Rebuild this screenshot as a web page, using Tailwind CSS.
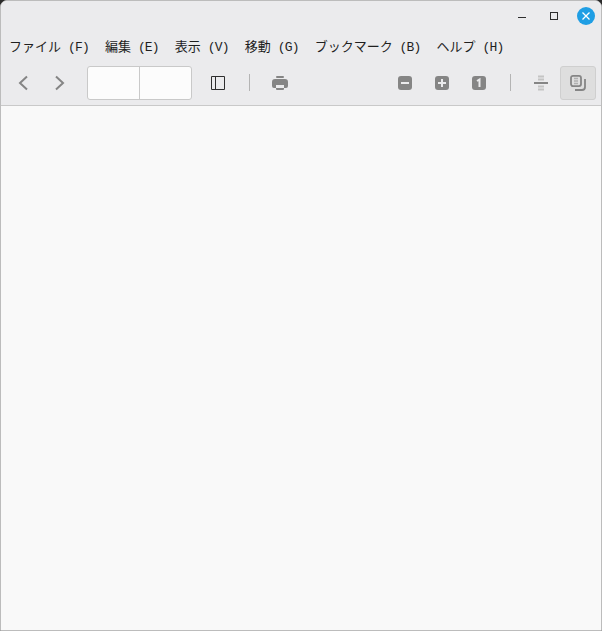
<!DOCTYPE html>
<html lang="ja">
<head>
    <meta charset="UTF-8">
    <title>Viewer</title>
    <script src="https://cdn.jsdelivr.net/npm/@tailwindcss/browser@4"></script>
</head>
<body class="bg-[#2b2b2b]">
    <div class="flex h-[631px] w-[602px] flex-col overflow-hidden rounded-t-[7px] border border-[#bcbcbc] bg-[#f9f9f9]">
        <!-- Title bar -->
        <div class="flex h-[31px] items-start justify-end bg-[#ebebed] pr-[6px] pt-[6px]">
            <button class="flex h-[18px] w-[18px] items-center justify-center">
                <svg width="18" height="18" viewBox="0 0 18 18"><path d="M5 10.500h8" stroke="#2e2e2e" stroke-width="1"/></svg>
            </button>
            <button class="ml-[14px] flex h-[18px] w-[18px] items-center justify-center">
                <svg width="18" height="18" viewBox="0 0 18 18"><rect x="5.500" y="5.500" width="7" height="7" fill="none" stroke="#2e2e2e" stroke-width="1"/></svg>
            </button>
            <button class="ml-[14px] flex h-[18px] w-[18px] items-center justify-center rounded-full bg-[#1f9ee4]">
                <svg width="18" height="18" viewBox="0 0 18 18"><path d="M5.500 5.500l7 7M12.500 5.500l-7 7" stroke="#fff" stroke-width="1.300"/></svg>
            </button>
        </div>

        <!-- Menu bar -->
        <div class="flex h-[29px] items-center gap-[16px] bg-[#ebebed] pl-[8px] pt-[1px] font-['Liberation_Mono','Noto_Sans_CJK_JP',monospace] text-[13px] leading-none text-[#1f1f1f]">
            <span>ファイル<span class="tracking-[-0.83px]"> (F)</span></span>
            <span>編集<span class="tracking-[-0.83px]"> (E)</span></span>
            <span>表示<span class="tracking-[-0.83px]"> (V)</span></span>
            <span>移動<span class="tracking-[-0.83px]"> (G)</span></span>
            <span>ブックマーク<span class="tracking-[-0.83px]"> (B)</span></span>
            <span>ヘルプ<span class="tracking-[-0.83px]"> (H)</span></span>
        </div>

        <!-- Toolbar -->
        <div class="flex h-[45px] items-start border-b border-[#c9c9c9] bg-[#ebebed] pt-[5px]">
            <svg class="ml-[14px] mt-[9px]" width="16" height="16" viewBox="0 0 16 16"><path d="M12 1.500L5 8l7 6.500" fill="none" stroke="#858585" stroke-width="2"/></svg>
            <svg class="ml-[21px] mt-[9px]" width="16" height="16" viewBox="0 0 16 16"><path d="M4 1.500L11 8l-7 6.500" fill="none" stroke="#858585" stroke-width="2"/></svg>
            <div class="ml-[19px] flex h-[34px] w-[105px] rounded-[3px] border border-[#c9c9c9] bg-[#fcfcfc]">
                <div class="w-[52px] border-r border-[#c9c9c9]"></div>
            </div>
            <svg class="ml-[19px] mt-[10px]" width="14" height="14" viewBox="0 0 14 14"><path d="M.5.5h13v13H.5zM4.500.5v13" fill="none" stroke="#2e2e2e" stroke-width="1"/></svg>
            <div class="ml-[24px] mt-[8px] h-[17px] w-px bg-[#b4b4b4]"></div>
            <svg class="ml-[22px] mt-[9px]" width="16" height="16" viewBox="0 0 16 16"><rect x="4" y="1" width="8" height="2" rx="1" fill="#858585"/><path d="M3 4h10a3 3 0 0 1 3 3v4a2 2 0 0 1-2 2h-2v-3H4v3H2a2 2 0 0 1-2-2V7a3 3 0 0 1 3-3z" fill="#858585"/><path d="M4 13h8v1a1 1 0 0 1-1 1H5a1 1 0 0 1-1-1z" fill="#858585"/></svg>
            <div class="ml-auto flex items-start pr-[5px]">
                <svg class="mt-[10px]" width="14" height="14" viewBox="0 0 14 14"><rect width="14" height="14" rx="3" fill="#858585"/><path d="M3 7h8" stroke="#ebebed" stroke-width="2"/></svg>
                <svg class="ml-[23px] mt-[10px]" width="14" height="14" viewBox="0 0 14 14"><rect width="14" height="14" rx="3" fill="#858585"/><path d="M3 7h8M7 3v8" stroke="#ebebed" stroke-width="2"/></svg>
                <svg class="ml-[23px] mt-[10px]" width="14" height="14" viewBox="0 0 14 14"><rect width="14" height="14" rx="3" fill="#858585"/><path d="M5 5l2.500-1.500V11" fill="none" stroke="#ebebed" stroke-width="2"/></svg>
                <div class="ml-[24px] mt-[8px] h-[17px] w-px bg-[#b4b4b4]"></div>
                <svg class="ml-[23px] mt-[9px]" width="14" height="16" viewBox="0 0 14 16"><path d="M4 1.500h6M4 4.500h6M4 11.500h6M4 14.500h6" stroke="#c4c4c4" stroke-width="2"/><path d="M0 8h14" stroke="#858585" stroke-width="2"/></svg>
                <div class="ml-[12px] flex h-[34px] w-[36px] items-center justify-center rounded-[3px] border border-[#cfcfcf] bg-[#dedede]">
                    <svg width="16" height="16" viewBox="0 0 16 16"><path d="M3 1.900h6a2 2 0 0 1 2 2v6.200a2 2 0 0 1-2 2H3a2 2 0 0 1-2-2V3.900a2 2 0 0 1 2-2z" fill="none" stroke="#858585" stroke-width="1.800" transform="translate(0 -1)"/><path d="M4 3.500h4M4 6h4M4 8.500h4" stroke="#b0b0b0" stroke-width="1.300"/><path d="M15 4v8a3 3 0 0 1-3 3H5" fill="none" stroke="#858585" stroke-width="1.800"/></svg>
                </div>
            </div>
        </div>

        <!-- Document area -->
        <div class="flex-1 bg-[#f9f9f9]"></div>
    </div>
</body>
</html>
